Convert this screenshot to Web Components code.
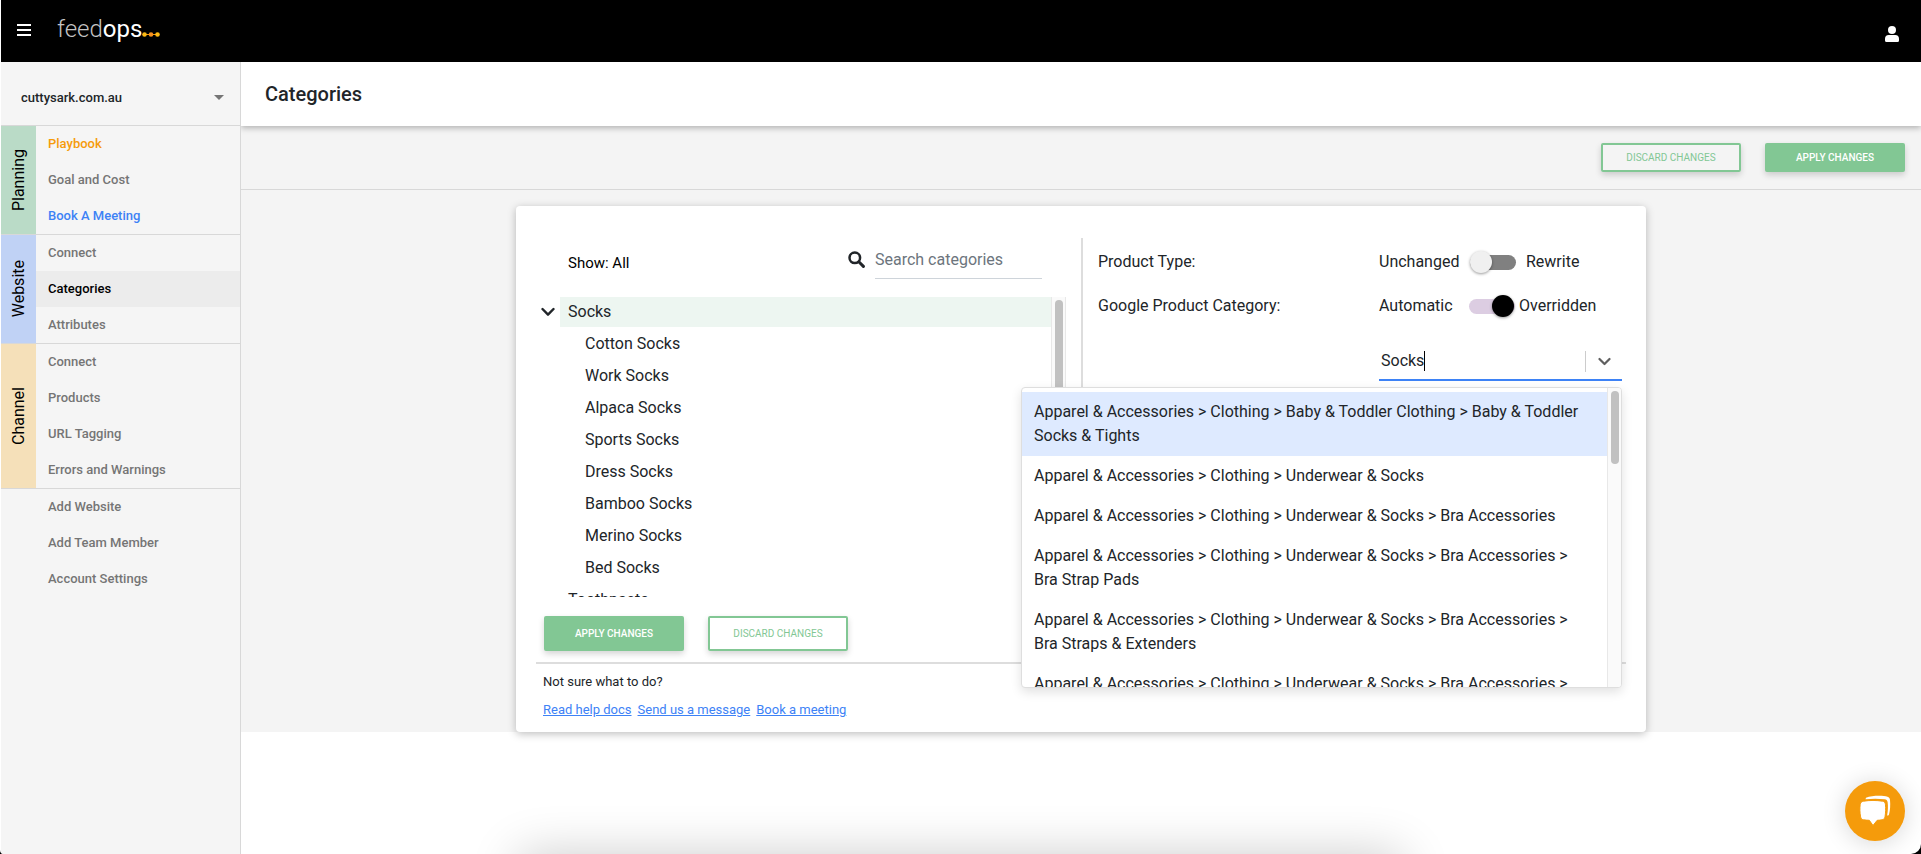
<!DOCTYPE html>
<html lang="en">
<head>
<meta charset="utf-8">
<meta name="viewport" content="width=device-width, initial-scale=1">
<title>Categories - feedops</title>
<style>
  html { background: #000; }
  body { margin: 0; font-family: Roboto, "Liberation Sans", sans-serif; font-size: 16px; color: #212529; }
</style>
</head>
<body>
<feed-app>
  <top-bar slot="header"></top-bar>
  <side-bar slot="sidebar">
    <nav-group label="Planning" style="--strip: #badbc7">
      <nav-item tone="orange">Playbook</nav-item>
      <nav-item>Goal and Cost</nav-item>
      <nav-item tone="blue">Book A Meeting</nav-item>
    </nav-group>
    <nav-group label="Website" style="--strip: #c0d2f5">
      <nav-item>Connect</nav-item>
      <nav-item current>Categories</nav-item>
      <nav-item>Attributes</nav-item>
    </nav-group>
    <nav-group label="Channel" style="--strip: #f5e0b9">
      <nav-item>Connect</nav-item>
      <nav-item>Products</nav-item>
      <nav-item>URL Tagging</nav-item>
      <nav-item>Errors and Warnings</nav-item>
    </nav-group>
    <nav-group plain>
      <nav-item>Add Website</nav-item>
      <nav-item>Add Team Member</nav-item>
      <nav-item>Account Settings</nav-item>
    </nav-group>
  </side-bar>
  <page-title>Categories</page-title>
  <action-bar>
    <action-button kind="outline">DISCARD CHANGES</action-button>
    <action-button>APPLY CHANGES</action-button>
  </action-bar>
  <category-card>
    <category-tree slot="left">
      <tree-row open>Socks</tree-row>
      <tree-row child>Cotton Socks</tree-row>
      <tree-row child>Work Socks</tree-row>
      <tree-row child>Alpaca Socks</tree-row>
      <tree-row child>Sports Socks</tree-row>
      <tree-row child>Dress Socks</tree-row>
      <tree-row child>Bamboo Socks</tree-row>
      <tree-row child>Merino Socks</tree-row>
      <tree-row child>Bed Socks</tree-row>
      <tree-row>Toothpaste</tree-row>
    </category-tree>
    <action-button slot="buttons" tall>APPLY CHANGES</action-button>
    <action-button slot="buttons" tall kind="outline">DISCARD CHANGES</action-button>
    <setting-row slot="right" label="Product Type:" off="Unchanged" on="Rewrite"></setting-row>
    <setting-row slot="right" label="Google Product Category:" off="Automatic" on="Overridden" checked></setting-row>
    <category-select slot="right">
      <category-option active>Apparel &amp; Accessories &gt; Clothing &gt; Baby &amp; Toddler Clothing &gt; Baby &amp; Toddler Socks &amp; Tights</category-option>
      <category-option>Apparel &amp; Accessories &gt; Clothing &gt; Underwear &amp; Socks</category-option>
      <category-option>Apparel &amp; Accessories &gt; Clothing &gt; Underwear &amp; Socks &gt; Bra Accessories</category-option>
      <category-option>Apparel &amp; Accessories &gt; Clothing &gt; Underwear &amp; Socks &gt; Bra Accessories &gt; Bra Strap Pads</category-option>
      <category-option>Apparel &amp; Accessories &gt; Clothing &gt; Underwear &amp; Socks &gt; Bra Accessories &gt; Bra Straps &amp; Extenders</category-option>
      <category-option>Apparel &amp; Accessories &gt; Clothing &gt; Underwear &amp; Socks &gt; Bra Accessories &gt;</category-option>
    </category-select>
  </category-card>
  <chat-launcher slot="overlay"></chat-launcher>
</feed-app>

<script>
const define = (name, render) => customElements.define(name, class extends HTMLElement {
  constructor() {
    super();
    this.attachShadow({ mode: 'open' });
  }
  connectedCallback() {
    this.shadowRoot.innerHTML = '<style>*{box-sizing:border-box}</style>' + render(this);
  }
});

define('feed-app', () => `
<style>
  :host { display: grid; grid-template-rows: auto 1fr; min-height: 100vh; position: relative; overflow: hidden;
          background: #fff; border-radius: 0 0 10px 4px; padding-left: 1px; box-sizing: border-box; }
  .body { display: grid; grid-template-columns: 240px minmax(0, 1fr); }
  main { position: relative; }
  /* soft shade at the lower edge of the window */
  .shade { position: absolute; top: 100%; left: 27%; width: 46%; height: 60px; box-shadow: 0 0 50px rgba(0,0,0,.2); }
</style>
<slot name="header"></slot>
<div class="body">
  <slot name="sidebar"></slot>
  <main><slot></slot></main>
</div>
<div class="shade"></div>
<slot name="overlay"></slot>`);

define('top-bar', () => `
<style>
  :host { display: block; }
  header { display: flex; align-items: center; height: 62px; padding: 0 22px 0 16px; background: #000; }
  button { border: 0; padding: 0; background: none; display: flex; }
  .menu { padding-bottom: 2px; }
  .logo { display: flex; align-items: flex-end; margin-left: 26px; padding-bottom: 4px; color: #fff;
          font-size: 24px; line-height: 28px; text-decoration: none; }
  .thin { font-weight: 300; color: #c4c4c4; }
  .logo svg { margin-bottom: 6px; flex: none; }
  .user { margin-left: auto; padding-top: 6px; }
</style>
<header>
  <button class="menu" aria-label="Menu"><svg width="14" height="12" viewBox="0 0 14 12"><path d="M0 1h14M0 6h14M0 11h14" stroke="#fff" stroke-width="2"/></svg></button>
  <a class="logo" href="#"><span class="thin">feed</span><span>ops</span><svg width="18" height="5" viewBox="0 0 18 5"><path d="M2 2.500h13" stroke="#f59b0b" stroke-width="1"/><circle cx="2.500" cy="2.500" r="2.300" fill="#fdb913"/><circle cx="9" cy="2.500" r="2.300" fill="#f5901e"/><circle cx="15.500" cy="2.500" r="2.300" fill="#fdb913"/></svg></a>
  <button class="user" aria-label="Account"><svg width="14" height="16" viewBox="0 0 14 16" fill="#fff"><circle cx="7" cy="4" r="4"/><path d="M3.800 9h6.400A3.800 3.800 0 0 1 14 12.800v1.700a1.500 1.500 0 0 1-1.500 1.500h-11A1.500 1.500 0 0 1 0 14.500v-1.700A3.800 3.800 0 0 1 3.800 9z"/></svg></button>
</header>`);

define('side-bar', () => `
<style>
  :host { display: block; background: #f5f5f5; border-right: 1px solid #d8d8d8; box-sizing: border-box; }
  .site { display: grid; align-items: center; height: 64px; padding-top: 8px; border-bottom: 1px solid #d8d8d8; }
  select, svg { grid-area: 1 / 1; }
  select { appearance: none; border: 0; background: none; height: 36px; padding: 0 40px 0 20px; color: #212529;
           font: 500 13px/20px Roboto, "Liberation Sans", sans-serif; }
  svg { justify-self: end; margin-right: 16px; pointer-events: none; }
</style>
<div class="site">
  <select aria-label="Website"><option>cuttysark.com.au</option></select>
  <svg width="10" height="5" viewBox="0 0 10 5"><path d="M0 0h10L5 5z" fill="#757575"/></svg>
</div>
<nav><slot></slot></nav>`);

define('nav-group', el => `
<style>
  :host { display: flex; border-bottom: 1px solid #d8d8d8; }
  :host([plain]) { border-bottom: 0; }
  .strip { width: 35px; display: flex; align-items: center; justify-content: center; background: var(--strip, transparent);
           writing-mode: vertical-rl; color: #000; line-height: 24px; }
  .strip span { transform: rotate(180deg); }
  .items { flex: 1; }
</style>
<div class="strip"><span>${el.getAttribute('label') || ''}</span></div>
<div class="items"><slot></slot></div>`);

define('nav-item', () => `
<style>
  :host { display: block; color: #757575; }
  :host([tone=orange]) { color: #f59b0b; }
  :host([tone=blue]) { color: #3d82f6; }
  :host([current]) { color: #000; background: #ececec; }
  a { display: block; padding: 0 12px; color: inherit; text-decoration: none; font-weight: 500; font-size: 13px; line-height: 36px; }
</style>
<a href="#"><slot></slot></a>`);

define('page-title', () => `
<style>
  :host { display: block; position: relative; background: #fff; box-shadow: 0 2px 6px rgba(0,0,0,.28); clip-path: inset(0 0 -12px 0); }
  h1 { margin: 0; padding: 0 24px; font-weight: 500; font-size: 20px; line-height: 64px; }
</style>
<h1><slot></slot></h1>`);

define('action-bar', () => `
<style>
  :host { display: flex; justify-content: flex-end; align-items: center; gap: 24px; height: 64px; padding: 0 16px;
          box-sizing: border-box; background: #f4f4f4; border-bottom: 1px solid #d8d8d8; }
</style>
<slot></slot>`);

define('action-button', () => `
<style>
  :host { display: block; }
  button { display: block; width: 140px; height: 29px; padding: 0; border: 2px solid #82c794; border-radius: 2px;
           background: #82c794; color: #fff; font: 500 10px/16px Roboto, "Liberation Sans", sans-serif;
           box-shadow: 0 3px 6px rgba(0,0,0,.17); }
  :host([tall]) button { height: 35px; }
  :host([kind=outline]) button { background: transparent; color: #82c794; font-weight: 400; }
</style>
<button type="button"><slot></slot></button>`);

define('category-card', () => `
<style>
  :host { display: block; padding-top: 16px; background: #f4f4f4; }
  .card { position: relative; width: min(1130px, calc(100% - 32px)); margin: 0 auto; padding: 32px 20px 12px; box-sizing: border-box;
          background: #fff; border-radius: 4px; box-shadow: 0 2px 8px rgba(0,0,0,.26); }
  .cols { display: grid; grid-template-columns: 1fr 1fr; }
  .right { border-left: 2px solid #ddd; padding: 2px 4px 0 15px; }
  .buttons { display: flex; gap: 24px; padding: 19px 8px 11px; }
  footer { border-top: 2px solid #ddd; padding: 8px 7px 0; font-size: 13px; line-height: 20px; }
  p { margin: 0 0 8px; }
  .links { display: flex; gap: 6px; }
  a { color: #3d82f6; }
</style>
<section class="card">
  <div class="cols">
    <div><slot name="left"></slot></div>
    <div class="right"><slot name="right"></slot></div>
  </div>
  <div class="buttons"><slot name="buttons"></slot></div>
  <footer>
    <p>Not sure what to do?</p>
    <div class="links"><a href="#">Read help docs</a><a href="#">Send us a message</a><a href="#">Book a meeting</a></div>
  </footer>
</section>`);

define('category-tree', () => `
<style>
  :host { display: block; }
  .tools { display: flex; padding: 3px 39px 12px 32px; }
  .show { color: #000; font-size: 15px; line-height: 44px; margin-right: auto; }
  label { display: flex; align-items: center; gap: 10px; height: 38px; }
  input { width: 167px; height: 38px; padding: 0; border: 0; border-bottom: 1px solid #ced4da; background: none; outline: 0;
          font: 16px/24px Roboto, "Liberation Sans", sans-serif; color: #212529; }
  input::placeholder { color: #6c757d; opacity: 1; }
  label svg { margin-bottom: 2px; }
  .tree { display: flex; height: 300px; padding-left: 4px; margin-right: 15px; }
  .rows { flex: 1; overflow: hidden; }
  .track { width: 15px; padding: 3px 3px; background: #fafafa; border: solid #e8e8e8; border-width: 0 1px; }
  .thumb { width: 8px; height: 150px; border-radius: 4px; background: #c1c1c1; }
</style>
<div class="tools">
  <span class="show">Show: All</span>
  <label><svg width="17" height="17" viewBox="0 0 17 17" fill="none" stroke="#212529"><circle cx="6.800" cy="6.800" r="5.300" stroke-width="2.500"/><path d="M10.800 10.800l4.600 4.600" stroke-width="3" stroke-linecap="round"/></svg>
  <input type="text" placeholder="Search categories" aria-label="Search categories"></label>
</div>
<div class="tree">
  <div class="rows"><slot></slot></div>
  <div class="track"><div class="thumb"></div></div>
</div>`);

define('tree-row', el => `
<style>
  :host { display: flex; align-items: center; height: 30px; margin-bottom: 2px; }
  .mark { width: 20px; display: flex; padding-left: 1px; }
  .name { flex: 1; padding-left: 8px; line-height: 30px; }
  :host([child]) .name { padding-left: 25px; }
  :host([open]) .name { background: #edf6f1; }
</style>
<span class="mark">${el.hasAttribute('open') ? '<svg width="14" height="10" viewBox="0 0 14 10"><path d="M1.500 2L7 7.700 12.500 2" fill="none" stroke="#212529" stroke-width="2.400" stroke-linecap="round" stroke-linejoin="round"/></svg>' : ''}</span>
<span class="name"><slot></slot></span>`);

define('setting-row', el => `
<style>
  :host { display: grid; grid-template-columns: minmax(0, 1fr) 243px; align-items: center; line-height: 44px; }
  label { display: grid; grid-template-columns: 91px 46px 1fr; align-items: center; }
  .on { padding-left: 10px; }
  :host([checked]) label { grid-template-columns: 90px 46px 1fr; }
  :host([checked]) .on { padding-left: 4px; }
  input { appearance: none; margin: 0; width: 46px; height: 22px; display: flex; align-items: center; position: relative; }
  input::before { content: ""; width: 46px; height: 15px; border-radius: 8px; background: #808080; }
  input::after { content: ""; position: absolute; left: 0; top: 0; width: 22px; height: 22px; border-radius: 50%;
                 background: #f0f0f0; box-shadow: 0 1px 3px rgba(0,0,0,.4); }
  input:checked::before { background: #dccde2; }
  input:checked::after { left: auto; right: 1px; background: #000; }
</style>
<span>${el.getAttribute('label')}</span>
<label><span>${el.getAttribute('off')}</span><input type="checkbox" role="switch" ${el.hasAttribute('checked') ? 'checked' : ''}><span class="on">${el.getAttribute('on')}</span></label>`);

define('category-select', () => `
<style>
  :host { display: block; position: relative; z-index: 2; width: 243px; margin: 15px 0 0 auto; }
  .control { display: flex; align-items: center; height: 38px; border-bottom: 2px solid #3d82f6; }
  /* the caret stands after the typed text */
  input { flex: 1; min-width: 0; height: 24px; padding: 0 2px; border: 0; outline: 0; caret-color: transparent;
          font: 16px/24px Roboto, "Liberation Sans", sans-serif; color: #212529;
          background: linear-gradient(#000, #000) 45px 2px / 1px 20px no-repeat; }
  button { display: flex; align-items: center; justify-content: center; width: 37px; height: 21px; padding: 0;
           border: 0; border-left: 1px solid #ccc; background: none; }
  .menu { position: absolute; top: 44px; right: 0; width: 601px; height: 301px; display: flex; overflow: hidden;
          background: #fff; border: 1px solid #dedede; border-radius: 4px; box-shadow: 0 4px 11px rgba(0,0,0,.12); }
  .list { flex: 1; padding-top: 4px; overflow: hidden; }
  .track { width: 14px; padding: 3px; background: #fafafa; border-left: 1px solid #e8e8e8; }
  .thumb { width: 8px; height: 73px; border-radius: 4px; background: #c1c1c1; }
</style>
<div class="control">
  <input type="text" role="combobox" aria-expanded="true" aria-controls="menu" aria-label="Google product category" value="Socks">
  <button type="button" aria-label="Show options"><svg width="13" height="9" viewBox="0 0 13 9"><path d="M1.500 2L6.500 7l5-5" fill="none" stroke="#5f5f5f" stroke-width="2.200" stroke-linecap="round" stroke-linejoin="round"/></svg></button>
</div>
<div class="menu" id="menu">
  <div class="list" role="listbox"><slot></slot></div>
  <div class="track"><div class="thumb"></div></div>
</div>`);

define('category-option', () => `
<style>
  :host { display: block; padding: 8px 12px; line-height: 24px; color: #212529; }
  :host([active]) { background: #deeaff; }
</style>
<slot></slot>`);

define('chat-launcher', () => `
<style>
  :host { position: fixed; right: 16px; bottom: 13px; z-index: 5; }
  button { display: flex; align-items: center; justify-content: center; width: 60px; height: 60px; padding: 0; border: 0;
           border-radius: 50%; background: #f59b0b; box-shadow: 0 2px 24px rgba(0,0,0,.16); }
</style>
<button type="button" aria-label="Open chat"><svg width="32" height="32" viewBox="0 0 32 32"><path d="M7 2.800C13 .400 24 .500 28.500 1.700c1.600.500 2.300 1.500 2.500 3.200.500 5 .200 10-1 14.500-.300 1-1 1.200-1.900 1.200.900-4.600 1.100-9.500.500-13.500-.300-1.800-1.300-2.600-3-2.800C19.500 3.600 13 3.600 6.500 4.300z" fill="#fff"/><path d="M4.500 6.200c6-1 13-1 19 0 1.800.300 2.700 1.200 2.900 3 .500 4.300.300 8.600-.400 12.700-.300 1.700-1.200 2.600-2.900 2.900-1.600.300-3.200.400-4.900.500L14 30.500l-3.700-5.200c-2-.100-4-.200-5.800-.500-1.700-.300-2.600-1.200-2.900-2.900-.800-4.200-.900-8.500-.400-12.700.300-1.800 1.500-2.700 3.300-3z" fill="#fff" stroke="#f59b0b" stroke-width="1"/></svg></button>`);
</script>
</body>
</html>
